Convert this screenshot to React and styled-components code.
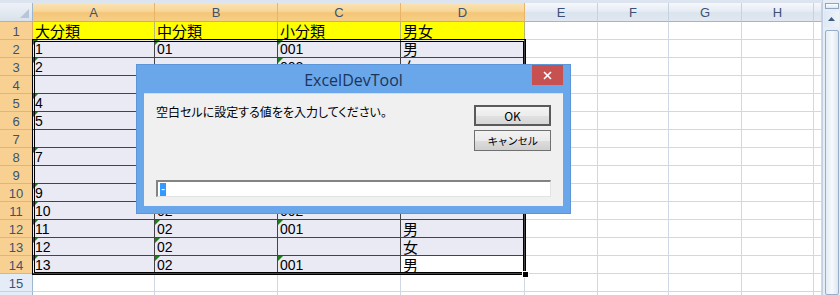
import React from "react";
import styled, { createGlobalStyle, css } from "styled-components";

const GlobalStyle = createGlobalStyle`
  html, body {
    margin: 0;
    padding: 0;
    background: #ffffff;
  }
  body {
    width: 840px;
    height: 295px;
    overflow: hidden;
    font-family: "Liberation Sans", "Noto Sans CJK JP", sans-serif;
  }
`;

const COLS = ["A", "B", "C", "D", "E", "F", "G", "H", ""];

// row 1 is the yellow title row, rows 2-14 are the filled range
// (B4:D10 sit under the dialog, left empty)
const DATA = [
  ["大分類", "中分類", "小分類", "男女"],
  ["1", "01", "001", "男"],
  ["2", "", "002", "女"],
  ["", "", "", ""],
  ["4", "", "", ""],
  ["5", "", "", ""],
  ["", "", "", ""],
  ["7", "", "", ""],
  ["", "", "", ""],
  ["9", "", "", ""],
  ["10", "02", "002", ""],
  ["11", "02", "001", "男"],
  ["12", "02", "", "女"],
  ["13", "02", "001", "男"],
];

const isNumText = (v) => /^[0-9]+$/.test(v);

function App() {
  const rows = Array.from({ length: 16 }, (_, i) => i + 1);

  return (
    <>
      <GlobalStyle />
      <Window>
        <SheetArea>
          <Grid>
            <Corner>
              <CornerMark />
            </Corner>
            {COLS.map((c, i) => (
              <ColHeader key={"h" + i} selected={i < 4}>
                {c}
              </ColHeader>
            ))}
            {rows.map((r) => (
              <React.Fragment key={r}>
                <RowHeader selected={r <= 14}>{r}</RowHeader>
                {COLS.map((c, ci) => {
                  const inRange = r <= 14 && ci < 4;
                  const value = inRange ? DATA[r - 1][ci] : "";
                  const kind = !inRange ? "plain" : r === 1 ? "title" : "data";
                  return (
                    <Cell
                      key={c + ci}
                      kind={kind}
                      active={r === 14 && ci === 3}
                      cjk={value !== "" && !isNumText(value)}
                    >
                      {kind === "data" && isNumText(value) && <ErrorMark />}
                      {value}
                    </Cell>
                  );
                })}
              </React.Fragment>
            ))}
          </Grid>
          <SelectionFrame>
            <FillHandle />
          </SelectionFrame>
        </SheetArea>

        <Scrollbar>
          <SplitBox />
          <ArrowButton>
            <svg width="7" height="4" viewBox="0 0 7 4">
              <path d="M0 4 L3.5 0 L7 4 Z" fill="#3c5a84" />
            </svg>
          </ArrowButton>
          <Thumb />
        </Scrollbar>

        <Dialog>
          <TitleBar>
            <span />
            <Title>ExcelDevTool</Title>
            <CloseButton>
              <svg width="9" height="9" viewBox="0 0 9 9">
                <path d="M1 1 L8 8 M8 1 L1 8" stroke="#ffffff" strokeWidth="1.6" />
              </svg>
            </CloseButton>
          </TitleBar>
          <DialogBody>
            <TopRow>
              <Message>空白セルに設定する値をを入力してください。</Message>
              <ButtonColumn>
                <Button primary>OK</Button>
                <Button small>キャンセル</Button>
              </ButtonColumn>
            </TopRow>
            <InputBox>
              <Selected>-</Selected>
            </InputBox>
          </DialogBody>
        </Dialog>
      </Window>
    </>
  );
}

export default App;

const Window = styled.div`
  position: relative;
  width: 840px;
  height: 295px;
  display: flex;
  overflow: hidden;
  background: #ffffff;
`;

const SheetArea = styled.div`
  position: relative;
  flex: 1;
  padding-top: 3px;
  background: linear-gradient(#dbe4ef, #dbe4ef) top / 100% 3px no-repeat;
  overflow: hidden;
`;

const Grid = styled.div`
  display: grid;
  grid-template-columns: 33px 122px 123px 123px 124px 73px 71px 73px 72px 1fr;
  grid-template-rows: 19px repeat(16, 18px);
`;

const headerText = css`
  font-family: "Liberation Sans", sans-serif;
  font-size: 13px;
  color: #3d5174;
  display: flex;
  align-items: center;
  justify-content: center;
  box-sizing: border-box;
`;

const Corner = styled.div`
  position: relative;
  background: linear-gradient(#eef2f7, #d9e1eb);
  border-right: 1px solid #9eb6ce;
  border-bottom: 1px solid #9eb6ce;
  box-sizing: border-box;
`;

const CornerMark = styled.div`
  position: absolute;
  right: 3px;
  bottom: 3px;
  width: 0;
  height: 0;
  border-left: 9px solid transparent;
  border-bottom: 9px solid #b6c6da;
`;

const ColHeader = styled.div`
  ${headerText}
  padding-top: 1px;
  border-right: 1px solid ${(p) => (p.selected ? "#e7b46a" : "#c5d2e2")};
  border-bottom: 1px solid ${(p) => (p.selected ? "#e0a957" : "#9eb6ce")};
  background: ${(p) =>
    p.selected
      ? "linear-gradient(#fbe3b3, #f8d699 45%, #f4c677 55%, #f6cf86)"
      : "linear-gradient(#f6f8fb, #e6ecf4 45%, #dbe3ee 55%, #e1e8f1)"};
`;

const RowHeader = styled.div`
  ${headerText}
  padding-top: 1px;
  border-right: 1px solid ${(p) => (p.selected ? "#e0a957" : "#9eb6ce")};
  border-bottom: 1px solid ${(p) => (p.selected ? "#e7b46a" : "#c5d2e2")};
  background: ${(p) => (p.selected ? "#f8d192" : "#e4ecf7")};
`;

const cellKinds = {
  plain: css`
    background: #ffffff;
    border-right: 1px solid #d0d7e5;
    border-bottom: 1px solid #d0d7e5;
  `,
  title: css`
    background: #ffff00;
    border-right: 1px solid #b8b86a;
    border-bottom: 1px solid #d0d7e5;
  `,
  data: css`
    background: #e9eaf4;
    border-right: 1px solid #444444;
    border-bottom: 1px solid #444444;
  `,
};

const Cell = styled.div`
  position: relative;
  box-sizing: border-box;
  padding: 1px 0 0 2px;
  white-space: nowrap;
  color: #000000;
  font-size: ${(p) => (p.cjk ? "15px" : "14px")};
  line-height: 16px;
  font-family: ${(p) =>
    p.cjk
      ? '"Noto Sans CJK JP", sans-serif'
      : '"Liberation Sans", sans-serif'};
  ${(p) => cellKinds[p.kind]}
  ${(p) => p.active && "background: #ffffff;"}
`;

const ErrorMark = styled.span`
  position: absolute;
  left: 0;
  top: 0;
  width: 0;
  height: 0;
  border-top: 5px solid #1e7b1e;
  border-right: 5px solid transparent;
`;

const SelectionFrame = styled.div`
  position: absolute;
  left: 32px;
  top: 39px;
  width: 494px;
  height: 236px;
  box-sizing: border-box;
  border: 3px double #000000;
  pointer-events: none;
`;

const FillHandle = styled.div`
  position: absolute;
  right: -6px;
  bottom: -6px;
  width: 5px;
  height: 5px;
  background: #000000;
  border: 1px solid #ffffff;
`;

const Scrollbar = styled.div`
  width: 18px;
  box-sizing: border-box;
  display: flex;
  flex-direction: column;
  align-items: center;
  padding-top: 3px;
  gap: 2px;
  background: #e6edf6;
  border-left: 1px solid #c3d0e1;
`;

const SplitBox = styled.div`
  width: 14px;
  height: 6px;
  box-sizing: border-box;
  border: 1px solid #8ea5c5;
  background: linear-gradient(#ffffff, #dde6f1);
`;

const ArrowButton = styled.div`
  width: 15px;
  height: 16px;
  display: flex;
  align-items: center;
  justify-content: center;
  background: linear-gradient(90deg, #dfe8f3, #eef3f9);
`;

const Thumb = styled.div`
  width: 14px;
  flex: 1;
  margin: 1px 0 0;
  box-sizing: border-box;
  border: 1px solid #97aecb;
  border-radius: 2px;
  background: linear-gradient(90deg, #e4ecf6, #f6f9fc 50%, #dce6f2);
`;

const Dialog = styled.div`
  position: absolute;
  left: 137px;
  top: 65px;
  width: 433px;
  height: 148px;
  box-sizing: border-box;
  padding: 0 7px 7px;
  display: flex;
  flex-direction: column;
  background: #6aa6ea;
  box-shadow: 0 0 0 1px #5c95d8;
`;

const TitleBar = styled.div`
  height: 28px;
  display: grid;
  grid-template-columns: 31px 1fr 31px;
  align-items: start;
`;

const Title = styled.div`
  text-align: center;
  font-family: "Open Sans", sans-serif;
  font-size: 16px;
  line-height: 30px;
  color: #1a3558;
`;

const CloseButton = styled.div`
  width: 31px;
  height: 20px;
  display: flex;
  align-items: center;
  justify-content: center;
  background: #c75050;
`;

const DialogBody = styled.div`
  flex: 1;
  box-sizing: border-box;
  padding: 11px 12px 9px 12px;
  display: flex;
  flex-direction: column;
  justify-content: space-between;
  background: #f0f0f0;
  border-top: 1px solid #dcdcdc;
`;

const TopRow = styled.div`
  display: flex;
  justify-content: space-between;
  align-items: flex-start;
`;

const Message = styled.div`
  font-family: "Noto Sans CJK JP", sans-serif;
  font-size: 12px;
  line-height: 14px;
  font-feature-settings: "palt";
  color: #000000;
`;

const ButtonColumn = styled.div`
  display: flex;
  flex-direction: column;
  gap: 4px;
`;

const Button = styled.div`
  width: 77px;
  height: 21px;
  box-sizing: border-box;
  display: flex;
  align-items: center;
  justify-content: center;
  font-family: "Noto Sans CJK JP", sans-serif;
  font-size: ${(p) => (p.small ? "10.5px" : "12px")};
  letter-spacing: ${(p) => (p.small ? "-0.5px" : "0")};
  color: #000000;
  border: 1px solid #707070;
  background: linear-gradient(#f2f2f2, #ebebeb 50%, #dddddd 51%, #cfcfcf);
  ${(p) =>
    p.primary &&
    css`
      border: 2px solid #5a5a5a;
      background: linear-gradient(#f4f4f4, #ececec 50%, #e1e1e1 51%, #d6d6d6);
    `}
`;

const InputBox = styled.div`
  height: 17px;
  box-sizing: border-box;
  display: flex;
  align-items: center;
  padding-left: 2px;
  background: #ffffff;
  border-top: 2px solid #838383;
  border-left: 2px solid #838383;
  border-right: 1px solid #e3e3e3;
  border-bottom: 1px solid #e3e3e3;
`;

const Selected = styled.span`
  display: inline-block;
  width: 6px;
  height: 13px;
  line-height: 12px;
  text-align: center;
  font-size: 12px;
  font-family: "Liberation Sans", sans-serif;
  color: #ffffff;
  background: #3399ff;
`;
